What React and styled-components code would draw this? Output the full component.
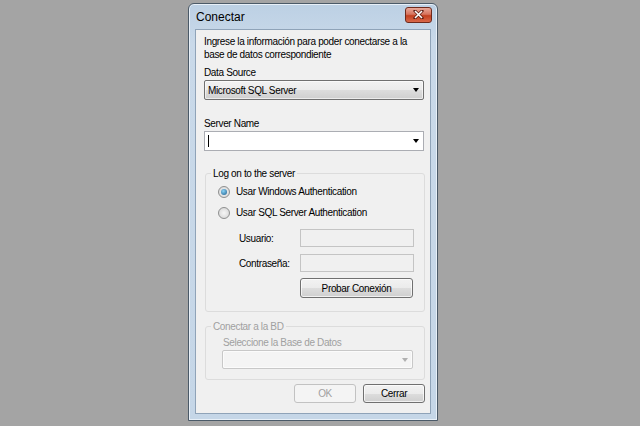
import React from "react";
import styled, { createGlobalStyle } from "styled-components";

const GlobalStyle = createGlobalStyle`
  html, body {
    margin: 0;
    padding: 0;
    background: #a4a4a4;
    font-family: "Liberation Sans", Arial, sans-serif;
    font-size: 10px;
    letter-spacing: -0.35px;
    color: #000;
  }
`;

const Desktop = styled.div`
  width: 640px;
  height: 426px;
  padding: 3px 0 0 188px;
  box-sizing: border-box;
  background: #a4a4a4;
`;

const Window = styled.div`
  width: 250px;
  height: 418px;
  box-sizing: border-box;
  border: 1px solid #4b5a68;
  border-radius: 6px 6px 0 0;
  background: linear-gradient(#bcd0e4, #c9d9e9 40px, #c5d6e7);
  box-shadow: inset 0 0 0 1px #e8f0f8;
  display: flex;
  flex-direction: column;
  padding: 0 6px 6px 6px;
`;

const TitleBar = styled.div`
  height: 25px;
  display: flex;
  align-items: center;
  justify-content: space-between;
  padding-left: 1px;
`;

const Title = styled.span`
  letter-spacing: 0;
  font-size: 12px;
  color: #000;
`;

const CloseButton = styled.div`
  width: 27px;
  height: 16px;
  margin-top: -4px;
  margin-right: -1px;
  box-sizing: border-box;
  border: 1px solid #6e2a1c;
  border-radius: 3px;
  background: linear-gradient(#e9a99a, #d6735d 45%, #c2401f 55%, #d9684a);
  display: flex;
  align-items: center;
  justify-content: center;
`;

const Client = styled.div`
  flex: 1;
  background: #f0f0f0;
  border: 1px solid #8fa3b8;
  padding: 5px 6px 0 8px;
  display: flex;
  flex-direction: column;
`;

const Intro = styled.p`
  margin: 0;
  line-height: 13px;
  width: 220px;
`;

const FieldLabel = styled.div`
  margin-top: ${(p) => p.$top || 0}px;
  margin-left: ${(p) => p.$left || 0}px;
  line-height: 12px;
  color: ${(p) => (p.$disabled ? "#a0a0a0" : "#000")};
`;

const Combo = styled.div`
  margin-top: 1px;
  margin-left: ${(p) => p.$left || 0}px;
  width: ${(p) => p.$width || 220}px;
  height: ${(p) => p.$height || 20}px;
  box-sizing: border-box;
  border: 1px solid ${(p) => (p.$disabled ? "#c8c8c8" : p.$edit ? "#abadb3" : "#707070")};
  border-radius: ${(p) => (p.$edit ? 0 : 2)}px;
  background: ${(p) =>
    p.$edit
      ? "#fff"
      : p.$disabled
      ? "#f4f4f4"
      : "linear-gradient(#f2f2f2, #ebebeb 50%, #dddddd 50%, #cfcfcf)"};
  display: flex;
  align-items: center;
  padding: 0 4px 0 3px;
  box-shadow: ${(p) => (p.$edit ? "none" : "inset 0 0 0 1px rgba(255,255,255,0.6)")};
`;

const ComboText = styled.span`
  flex: 1;
  white-space: nowrap;
`;

const Caret = styled.span`
  width: 1px;
  height: 12px;
  background: #000;
`;

const Arrow = styled.span`
  width: 0;
  height: 0;
  border-left: 3px solid transparent;
  border-right: 3px solid transparent;
  border-top: 4px solid ${(p) => (p.$disabled ? "#b0b0b0" : "#000")};
  margin-left: auto;
`;

const Group = styled.fieldset`
  margin: ${(p) => p.$top}px 0 0 1px;
  width: 220px;
  height: ${(p) => p.$height}px;
  box-sizing: border-box;
  border: 1px solid #dcdcdc;
  border-radius: 3px;
  padding: 0 0 0 12px;
  min-width: 0;
`;

const Legend = styled.legend`
  padding: 0 2px;
  margin-left: -7px;
  line-height: 13px;
  color: ${(p) => (p.$disabled ? "#a0a0a0" : "#000")};
`;

const RadioRow = styled.div`
  display: flex;
  align-items: center;
  gap: 6px;
  margin-top: ${(p) => p.$top}px;
  height: 13px;
`;

const RadioDot = styled.span`
  width: 12px;
  height: 12px;
  border-radius: 50%;
  box-sizing: border-box;
  border: 1px solid #8e8f8f;
  background: radial-gradient(circle, #f6f6f6, #d2d2d2);
  display: flex;
  align-items: center;
  justify-content: center;
  &::after {
    content: "";
    width: 6px;
    height: 6px;
    border-radius: 50%;
    background: ${(p) =>
      p.$checked ? "radial-gradient(circle at 40% 35%, #8ad3f6, #1b5c8c)" : "transparent"};
  }
`;

const CredGrid = styled.div`
  display: grid;
  grid-template-columns: 61px 114px;
  grid-auto-rows: 18px;
  row-gap: 7px;
  align-items: center;
  margin: 10px 0 0 21px;
`;

const Input = styled.div`
  height: 18px;
  box-sizing: border-box;
  border: 1px solid #c4c4c4;
  background: #f0f0f0;
`;

const Button = styled.div`
  width: ${(p) => p.$width}px;
  height: ${(p) => p.$height || 20}px;
  box-sizing: border-box;
  border: 1px solid ${(p) => (p.$disabled ? "#c2c2c2" : "#707070")};
  border-radius: 3px;
  background: ${(p) =>
    p.$disabled ? "#f4f4f4" : "linear-gradient(#f2f2f2, #ebebeb 50%, #dddddd 50%, #cfcfcf)"};
  box-shadow: ${(p) => (p.$disabled ? "none" : "inset 0 0 0 1px rgba(255,255,255,0.7)")};
  color: ${(p) => (p.$disabled ? "#a0a0a0" : "#000")};
  display: flex;
  align-items: center;
  justify-content: center;
`;

const ButtonCell = styled.div`
  grid-column: 2;
`;

const Footer = styled.div`
  display: flex;
  justify-content: flex-end;
  gap: 7px;
  margin-top: 4px;
  width: 221px;
`;

const CloseGlyph = () => (
  <svg width="11" height="9" viewBox="0 0 11 9">
    <path d="M2 1 L9 8 M9 1 L2 8" stroke="#5a1a10" strokeWidth="3" strokeLinecap="square" />
    <path d="M2 1 L9 8 M9 1 L2 8" stroke="#ffffff" strokeWidth="1.6" />
  </svg>
);

const App = () => {
  return (
    <Desktop>
      <GlobalStyle />
      <Window>
        <TitleBar>
          <Title>Conectar</Title>
          <CloseButton>
            <CloseGlyph />
          </CloseButton>
        </TitleBar>
        <Client>
          <Intro>
            Ingrese la información para poder conectarse a la base de datos correspondiente
          </Intro>

          <FieldLabel $top={6}>Data Source</FieldLabel>
          <Combo>
            <ComboText>Microsoft SQL Server</ComboText>
            <Arrow />
          </Combo>

          <FieldLabel $top={18}>Server Name</FieldLabel>
          <Combo $edit>
            <Caret />
            <Arrow />
          </Combo>

          <Group $top={16} $height={145}>
            <Legend>Log on to the server</Legend>
            <RadioRow $top={5}>
              <RadioDot $checked />
              <span>Usar Windows Authentication</span>
            </RadioRow>
            <RadioRow $top={8}>
              <RadioDot />
              <span>Usar SQL Server Authentication</span>
            </RadioRow>
            <CredGrid>
              <span>Usuario:</span>
              <Input />
              <span>Contraseña:</span>
              <Input />
              <ButtonCell>
                <Button $width={113}>Probar Conexión</Button>
              </ButtonCell>
            </CredGrid>
          </Group>

          <Group $top={8} $height={60}>
            <Legend $disabled>Conectar a la BD</Legend>
            <FieldLabel $top={4} $left={5} $disabled>
              Seleccione la Base de Datos
            </FieldLabel>
            <Combo $disabled $width={191} $left={4} $height={19}>
              <Arrow $disabled />
            </Combo>
          </Group>

          <Footer>
            <Button $width={62} $height={19} $disabled>
              OK
            </Button>
            <Button $width={62} $height={19}>
              Cerrar
            </Button>
          </Footer>
        </Client>
      </Window>
    </Desktop>
  );
};

export default App;
